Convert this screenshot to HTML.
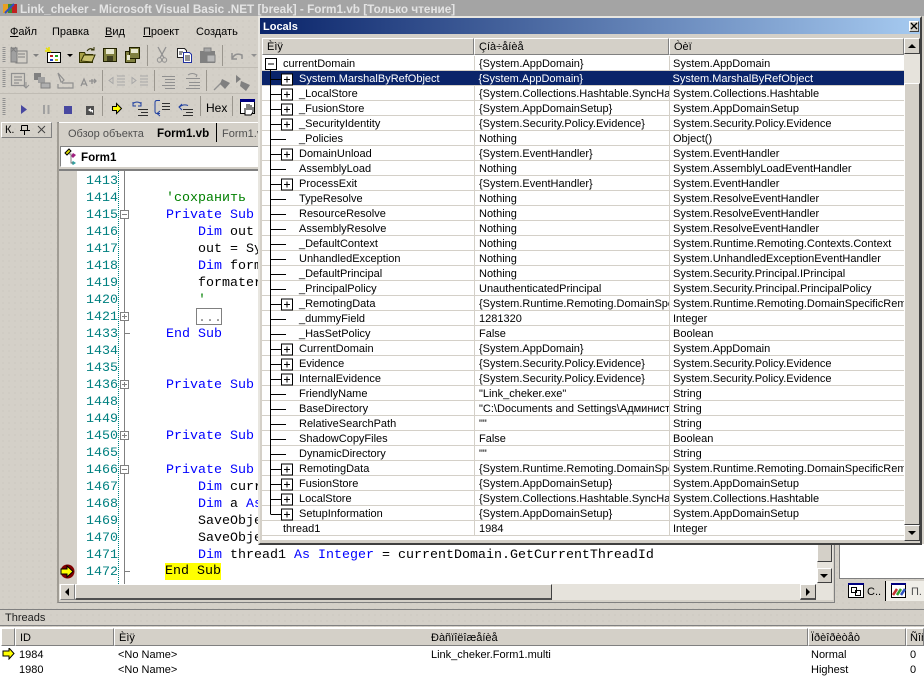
<!DOCTYPE html>
<html><head><meta charset="utf-8"><style>
html,body{margin:0;padding:0;width:924px;height:681px;overflow:hidden}
body{position:relative;background-color:#d4d0c8;background-image:radial-gradient(#c4c0b8 0.6px,transparent 0.8px);background-size:6px 6px;font:11px "Liberation Sans","Noto Sans CJK SC",sans-serif;color:#000}
.a{position:absolute;white-space:nowrap}
.b{position:absolute;box-sizing:border-box}
.c{position:absolute;font:13.33px/17px "Liberation Mono",monospace;white-space:pre;left:0;margin-top:1px}
.n{position:absolute;left:86px;font:13.33px/17px "Liberation Mono",monospace;color:#008080;margin-top:1px}
i{font-style:normal;color:#00f}
#l table{position:absolute;left:262px;top:56px;width:642px;table-layout:fixed;border-collapse:collapse;background:#fff}
#l td{height:11px;padding:3px 0 0;border-bottom:1px solid #d4d0c8;border-right:1px solid #d4d0c8;overflow:hidden;white-space:nowrap;line-height:11px;box-sizing:content-box}
#l td:nth-child(1){padding-left:37px;width:175px}
#l td:nth-child(2){padding-left:4px;width:190px}
#l td:nth-child(3){padding-left:3px;border-right:0}
#l tr.s td{background:#0a246a;color:#fff;border-right:0}
#l td.t{padding-left:21px!important;width:191px!important}
.h{position:absolute;box-sizing:border-box;background:#d4d0c8;border:1px solid;border-color:#fff #808080 #808080 #fff;line-height:17px;padding-left:4px}
.th{line-height:19px}
.sb{position:absolute;box-sizing:border-box;background:#d4d0c8;border:1px solid;border-color:#fff #404040 #404040 #fff}
</style></head><body>

<div class="b" style="left:0;top:0;width:924px;height:16px;background:#a4a4a4"></div>
<svg class="a" style="left:2px;top:3px" width="16" height="12"><rect x="1" y="1" width="5" height="9" fill="#e8a020"/><rect x="6" y="1" width="5" height="9" fill="#3a8a30"/><rect x="10" y="1" width="5" height="9" fill="#c02020"/><path d="M3 10L12 1" stroke="#3050c0" stroke-width="2"/></svg>
<div class="a" style="left:20px;top:3px;color:#e4e4e4;font-weight:bold;font-size:11.75px;line-height:14px">Link_cheker - Microsoft Visual Basic .NET [break] - Form1.vb [Только чтение]</div>

<div class="a" style="left:10px;top:25px;line-height:14px"><u>Ф</u>айл</div>
<div class="a" style="left:52px;top:25px;line-height:14px">Правка</div>
<div class="a" style="left:105px;top:25px;line-height:14px"><u>В</u>ид</div>
<div class="a" style="left:143px;top:25px;line-height:14px"><u>П</u>роект</div>
<div class="a" style="left:196px;top:25px;line-height:14px">Создать</div>

<!-- toolbars -->
<svg class="a" style="left:0;top:40px" width="262" height="82">
<g fill="none">
<path d="M0 27.500h258M0 53.500h258" stroke="#c0bcb4"/>
<path d="M4 7v16M4 30v17M4 58v17" stroke="#909090" stroke-width="3" stroke-dasharray="1 1"/>
<path d="M147.500 5v21M222.500 5v21M102.500 30v21M154.500 30v21M206.500 30v21M102.500 56v20M200.500 56v20M232.500 56v20" stroke="#9a968e"/>
<!-- row 1 -->
<path d="M16 11h11v12H16z" fill="#d4d0c8" stroke="#808080"/><path d="M11 8h6v14h-6z" fill="#a0a0a0" stroke="#808080"/><path d="M18 14h7M18 17h7" stroke="#808080"/><path d="M11 7l5 5M16 7l-5 5" stroke="#808080"/>
<path d="M33 14h6l-3 3z" fill="#808080"/>
<rect x="47.500" y="12.500" width="13" height="10" fill="#fff" stroke="#000"/><path d="M50 15h3v2h-3z" fill="#c02020"/><path d="M55 15h3v2h-3z" fill="#20a020"/><path d="M50 19h3v2h-3z" fill="#2040c0"/><path d="M55 19h3v2h-3z" fill="#c0c020"/><path d="M46 8l5 4M49 7v4M45 11h4" stroke="#e8e000" stroke-width="1.500"/>
<path d="M67 14h6l-3 3z" fill="#000"/>
<path d="M79.500 12.500h5l1 2h7v8h-13z" fill="#a8a048" stroke="#303000"/><path d="M81 21l3-6h11l-3 7z" fill="#c8c070" stroke="#303000"/><path d="M87 11q3-4 7-1M94 7v3h-3" stroke="#303000"/>
<rect x="103.500" y="8.500" width="13" height="13" fill="#808040" stroke="#202000"/><rect x="106" y="9" width="8" height="5" fill="#e8e8d0"/><rect x="107" y="16" width="6" height="5" fill="#404020"/>
<rect x="125.500" y="11.500" width="10" height="11" fill="#808040" stroke="#202000"/><rect x="129.500" y="7.500" width="10" height="11" fill="#808040" stroke="#202000"/><rect x="131" y="9" width="7" height="4" fill="#e8e8d0"/><rect x="127" y="15" width="3" height="5" fill="#e8e8d0"/>
<path d="M158 7l6 11M166 7l-6 11" stroke="#909090" stroke-width="1.300"/><circle cx="159.500" cy="20" r="2.200" stroke="#909090"/><circle cx="164.500" cy="20" r="2.200" stroke="#909090"/>
<path d="M177.500 8.500h7l2 2v7h-9z" stroke="#202020" fill="#fff"/><path d="M183.500 12.500h6l2 2v8h-8z" stroke="#2030a0" fill="#fff"/><path d="M179 12h4M179 14h3M185 16h5M185 18h5M185 20h5" stroke="#202020"/>
<rect x="200" y="11" width="15" height="12" fill="#808080"/><rect x="204" y="8" width="7" height="4" fill="#a8a8a8" stroke="#808080"/><rect x="207" y="15" width="8" height="7" fill="#b8b8b8" stroke="#808080"/>
<path d="M232 19q3-7 10-4v4M232 13v6h5" stroke="#909090" stroke-width="1.500"/><path d="M251 14h6l-3 3z" fill="#909090"/>
<!-- row 2 -->
<path d="M11.500 33.500h13v12h-13zM14 37h8M14 40h8M14 43h5" stroke="#909090" stroke-width="1.200"/><path d="M26 42v6M23 45l3 3 3-3" stroke="#909090"/>
<rect x="34" y="33" width="7" height="7" fill="#808080"/><rect x="38" y="37" width="7" height="6" fill="#a0a0a0"/><rect x="41" y="43" width="9" height="5" fill="#b0b0b0" stroke="#808080"/>
<path d="M58 33l3 9h1l2-2-6-7zM62 43h11v5H58v-4" stroke="#909090" stroke-width="1.200"/>
<path d="M81 46l3-7 3 7M82.500 44h3M89 41h6M92 39v5M94 39l2 2-2 2" stroke="#909090" stroke-width="1.300"/>
<path d="M117 36h8M117 39h8M117 42h8M117 45h8M109 40.500l4-3v6z" stroke="#a8a8a8"/>
<path d="M140 36h8M140 39h8M140 42h8M140 45h8M132 37.500v6l4-3z" stroke="#a8a8a8"/>
<path d="M162 36.500h13M165 39.500h10M165 42.500h10M162 45.500h13M165 48.500h10" stroke="#909090"/>
<path d="M186 38.500h14M189 42.500h11M189 45.500h11M186 48.500h14M188 35q4-3 9 0l-1 2" stroke="#909090"/>
<path d="M214 50l9-9" stroke="#909090" stroke-width="1.300"/><path d="M222 39l8 4-5 6-5-5z" fill="#808080"/>
<path d="M236 35l5 4-5 4zM241 41l9 4-4 6-6-5z" fill="#808080"/>
<!-- row 3 -->
<path d="M21 65l6 4.500-6 4.500z" fill="#4848a0"/>
<path d="M44 65v9M48.500 65v9" stroke="#a0a0a0" stroke-width="2"/>
<rect x="64" y="66" width="8" height="8" fill="#4848a0"/>
<rect x="86" y="66" width="8" height="9" fill="#505050"/><path d="M88 70l3-2v4zM90 70h3v3" fill="#fff"/>
<path d="M112.500 66.500h4v-3l5 5-5 5v-3h-4z" fill="#ffff00" stroke="#000"/>
<path d="M133 63.500q4-3 8 0M133 62v4h3M141 62v4h-3" stroke="#2040a0"/><path d="M138 69.500h10M141 72.500h7M138 75.500h10" stroke="#303030"/>
<path d="M160 60.500h-3q-2 0-2 2v9q0 2 2 2h3M160 71l-3 2.500 3 2.500" stroke="#2040a0"/><path d="M162 63.500h8M162 66.500h8M162 69.500h8" stroke="#303030"/>
<path d="M179 67.500q4-4 9-2M182 64l-3 3 3 3" stroke="#2040a0"/><path d="M183 69.500h10M186 72.500h7M183 75.500h10" stroke="#303030"/>
<rect x="240.500" y="59.500" width="14" height="14" fill="#fff" stroke="#000"/><rect x="240" y="59" width="15" height="3" fill="#000080"/><path d="M245 68v7h6l2-3v-5M247 64v6M249 64v6M251 65v5" stroke="#000" fill="#fff"/>
</g>
</svg>
<div class="a" style="left:206px;top:101px;line-height:14px;font-size:12px">Hex</div>

<!-- small tool panel -->
<div class="b" style="left:1px;top:122px;width:51px;height:16px;border:1px solid #808080;border-top-color:#fff;border-left-color:#fff;line-height:14px;padding-left:3px">К.</div>
<svg class="a" style="left:18px;top:124px" width="30" height="12"><path d="M3.500 1.500h6v5h2M2 6.500h10M6.500 6v5M3.500 1.500v5" fill="none" stroke="#000"/><path d="M20 2l7 7M27 2l-7 7" stroke="#404040"/></svg>

<!-- editor frame -->
<div class="b" style="left:57px;top:122px;width:778px;height:481px;border:1px solid #808080;border-left:2px solid #a09c94"></div>
<div class="b" style="left:59px;top:122px;width:202px;height:21px;background:#d4d0c8;border-top:1px solid #fff"></div>
<div class="b" style="left:152px;top:123px;width:65px;height:19px;background:#d4d0c8;border-right:1px solid #000"></div>
<div class="a" style="left:68px;top:127px;line-height:14px;color:#505050">Обзор объекта</div>
<div class="a" style="left:157px;top:127px;line-height:14px;font-weight:bold;font-size:11.6px">Form1.vb</div>
<div class="a" style="left:222px;top:127px;line-height:14px;color:#505050">Form1.vb</div>
<div class="b" style="left:60px;top:146px;width:210px;height:21px;background:#fff;border:1px solid;border-color:#808080 #fff #fff #808080"></div>
<svg class="a" style="left:63px;top:148px" width="20" height="18"><path d="M2 5l4-4 2 2-4 4z" fill="#e0e000" stroke="#000"/><path d="M10 5l3 2-3 3-2-2z" fill="#a02080"/><path d="M10 13l3 2-3 2-2-2z" fill="#30a0a0"/><path d="M6 6h2v9h2" stroke="#808080" fill="none"/></svg>
<div class="a" style="left:81px;top:151px;line-height:14px;font-weight:bold;font-size:11.6px">Form1</div>

<!-- code area -->
<div class="b" style="left:59px;top:171px;width:18px;height:413px;background:#d4d0c8"></div>
<div class="b" style="left:77px;top:171px;width:740px;height:413px;background:#fff"></div>
<div class="b" style="left:59px;top:169px;width:776px;height:2px;background:#808080"></div>
<div class="b" style="left:118px;top:171px;width:1px;height:413px;border-left:1px dotted #008080"></div>
<div class="b" style="left:124px;top:171px;width:1px;height:413px;background:#808080"></div>

<div class="n" style="top:172px">1413</div><div class="n" style="top:189px">1414</div><div class="n" style="top:206px">1415</div><div class="n" style="top:223px">1416</div><div class="n" style="top:240px">1417</div><div class="n" style="top:257px">1418</div><div class="n" style="top:274px">1419</div><div class="n" style="top:291px">1420</div><div class="n" style="top:308px">1421</div><div class="n" style="top:325px">1433</div><div class="n" style="top:342px">1434</div><div class="n" style="top:359px">1435</div><div class="n" style="top:376px">1436</div><div class="n" style="top:393px">1448</div><div class="n" style="top:410px">1449</div><div class="n" style="top:427px">1450</div><div class="n" style="top:444px">1465</div><div class="n" style="top:461px">1466</div><div class="n" style="top:478px">1467</div><div class="n" style="top:495px">1468</div><div class="n" style="top:512px">1469</div><div class="n" style="top:529px">1470</div><div class="n" style="top:546px">1471</div><div class="n" style="top:563px">1472</div>

<div class="c" style="left:166px;top:189px;color:#008000">'сохранить</div>
<div class="c" style="left:166px;top:206px"><i>Private Sub</i></div>
<div class="c" style="left:198px;top:223px"><i>Dim</i> out</div>
<div class="c" style="left:198px;top:240px">out = Sy</div>
<div class="c" style="left:198px;top:257px"><i>Dim</i> form</div>
<div class="c" style="left:198px;top:274px">formater</div>
<div class="c" style="left:198px;top:291px;color:#008000">'</div>
<div class="b" style="left:196px;top:308px;width:26px;height:17px;border:1px solid #808080"></div>
<div class="c" style="left:198px;top:309px;color:#808080">...</div>
<div class="c" style="left:166px;top:325px"><i>End Sub</i></div>
<div class="c" style="left:166px;top:376px"><i>Private Sub</i></div>
<div class="c" style="left:166px;top:427px"><i>Private Sub</i></div>
<div class="c" style="left:166px;top:461px"><i>Private Sub</i></div>
<div class="c" style="left:198px;top:478px"><i>Dim</i> curr</div>
<div class="c" style="left:198px;top:495px"><i>Dim</i> a <i>As</i></div>
<div class="c" style="left:198px;top:512px">SaveObje</div>
<div class="c" style="left:198px;top:529px">SaveObje</div>
<div class="c" style="left:198px;top:546px"><i>Dim</i> thread1 <i>As</i> <i>Integer</i> = currentDomain.GetCurrentThreadId</div>
<div class="c" style="left:165px;top:563px;margin-top:0;padding-top:1px;line-height:16px;background:#ffff00;color:#000;height:16px">End Sub</div>

<svg class="a" style="left:58px;top:170px" width="90" height="412" viewBox="58 170 90 412">
<g fill="#fff" stroke="#808080"><rect x="120.500" y="210.500" width="8" height="8"/><rect x="120.500" y="312.500" width="8" height="8"/><rect x="120.500" y="380.500" width="8" height="8"/><rect x="120.500" y="431.500" width="8" height="8"/><rect x="120.500" y="465.500" width="8" height="8"/></g>
<path d="M122 214.500h5M122 316.500h5M124.500 314v5M122 384.500h5M124.500 382v5M122 435.500h5M124.500 433v5M122 469.500h5" stroke="#808080"/>
<path d="M125 333.500h5M125 571.500h5" stroke="#808080"/>
<circle cx="67.500" cy="571.500" r="7" fill="#800000"/>
<path d="M61 569h6v-3l6 5.500-6 5.500v-3h-6z" fill="#ffff00" stroke="#000"/>
</svg>

<!-- editor scrollbars -->
<div class="b" style="left:59px;top:584px;width:774px;height:16px;background:#e6e3dc"></div>
<div class="sb" style="left:60px;top:584px;width:15px;height:16px;border-color:#fff #808080 #808080 #fff"></div>
<svg class="a" style="left:64px;top:588px" width="6" height="9"><path d="M5 0v8L1 4z" fill="#000"/></svg>
<div class="sb" style="left:75px;top:584px;width:477px;height:16px;border-bottom:2px solid #505050"></div>
<div class="sb" style="left:800px;top:584px;width:16px;height:16px;border-bottom:2px solid #505050"></div>
<svg class="a" style="left:805px;top:588px" width="6" height="9"><path d="M1 0v8l4-4z" fill="#000"/></svg>
<div class="b" style="left:817px;top:540px;width:16px;height:44px;background:#e6e3dc"></div>
<div class="sb" style="left:817px;top:540px;width:15px;height:22px"></div>
<div class="sb" style="left:817px;top:568px;width:15px;height:15px"></div>
<svg class="a" style="left:820px;top:573px" width="9" height="6"><path d="M0 1h8L4 5z" fill="#000"/></svg>

<!-- right panel -->
<div class="b" style="left:839px;top:544px;width:85px;height:35px;background:#fff;border-left:1px solid #808080;border-bottom:1px solid #808080"></div>
<div class="b" style="left:885px;top:581px;width:39px;height:20px;background:#f0eee8;border-left:1px solid #000"></div>
<div class="b" style="left:845px;top:581px;width:40px;height:20px;background:#d4d0c8"></div>
<svg class="a" style="left:847px;top:582px" width="70" height="18"><rect x="1.500" y="1.500" width="15" height="14" fill="#fff" stroke="#000"/><rect x="1" y="1" width="16" height="2" fill="#000080"/><path d="M4.500 5.500h5v5h-5zM8.500 8.500h5v5h-5z" fill="#fff" stroke="#000"/><rect x="44.500" y="1.500" width="14" height="14" fill="#fff" stroke="#000"/><rect x="44" y="1" width="15" height="2" fill="#000080"/><path d="M46 13l4-6" stroke="#c03030" stroke-width="2.500"/><path d="M50 13l4-6" stroke="#30a030" stroke-width="2.500"/><path d="M54 13l4-6" stroke="#3050c0" stroke-width="2.500"/></svg>
<div class="a" style="left:867px;top:585px;line-height:14px">С..</div>
<div class="a" style="left:911px;top:585px;line-height:14px;color:#505050">П.</div>

<!-- Threads -->
<div class="b" style="left:0;top:609px;width:924px;height:17px;border-top:1px solid #808080;border-bottom:1px solid #808080;line-height:17px;padding-left:5px;color:#202020">Threads</div>
<div class="b" style="left:0;top:627px;width:924px;height:54px;background:#fff"></div>
<div class="h th" style="left:1px;top:628px;width:14px;height:18px"></div>
<div class="h th" style="left:15px;top:628px;width:99px;height:18px">ID</div>
<div class="h th" style="left:114px;top:628px;width:694px;height:18px">Èìÿ<span style="position:absolute;left:316px">Ðàñïîëîæåíèå</span></div>
<div class="h th" style="left:808px;top:628px;width:98px;height:18px;padding-left:2px">Ïðèîðèòåò</div>
<div class="h th" style="left:906px;top:628px;width:18px;height:18px;overflow:hidden;padding-left:3px">Ñîñòîÿíèå</div>
<svg class="a" style="left:2px;top:648px" width="13" height="12"><path d="M1 3h6V0l5 5.500-5 5.500V8H1z" fill="#ffff00" stroke="#000"/></svg>
<div class="a" style="left:19px;top:648px;line-height:14px">1984</div>
<div class="a" style="left:118px;top:648px;line-height:14px">&lt;No Name&gt;</div>
<div class="a" style="left:431px;top:648px;line-height:14px">Link_cheker.Form1.multi</div>
<div class="a" style="left:811px;top:648px;line-height:14px">Normal</div>
<div class="a" style="left:910px;top:648px;line-height:14px">0</div>
<div class="a" style="left:19px;top:663px;line-height:14px">1980</div>
<div class="a" style="left:118px;top:663px;line-height:14px">&lt;No Name&gt;</div>
<div class="a" style="left:811px;top:663px;line-height:14px">Highest</div>
<div class="a" style="left:910px;top:663px;line-height:14px">0</div>

<!-- Locals window -->
<div id="l">
<div class="b" style="left:258px;top:16px;width:664px;height:529px;background:#d4d0c8;border:2px solid;border-color:#e8e6e0 #404040 #404040 #e8e6e0"></div>
<div class="b" style="left:260px;top:18px;width:660px;height:16px;background:linear-gradient(90deg,#0a246a,#a6caf0)"></div>
<div class="a" style="left:263px;top:20px;color:#fff;font-weight:bold;line-height:14px">Locals</div>
<div class="sb" style="left:909px;top:21px;width:10px;height:11px;background:#d4d0c8"></div>
<svg class="a" style="left:910px;top:22px" width="8" height="8"><path d="M1 1l6 6M7 1l-6 6" stroke="#000" stroke-width="1.300"/></svg>
<div class="h" style="left:262px;top:38px;width:212px;height:17px">Èìÿ</div>
<div class="h" style="left:474px;top:38px;width:195px;height:17px">Çíà÷åíèå</div>
<div class="h" style="left:669px;top:38px;width:235px;height:17px">Òèï</div>
<div class="b" style="left:262px;top:55px;width:642px;height:485px;background:#fff"></div>
<table>
<tr><td class="t">currentDomain</td><td>{System.AppDomain}</td><td>System.AppDomain</td></tr>
<tr class="s"><td>System.MarshalByRefObject</td><td>{System.AppDomain}</td><td>System.MarshalByRefObject</td></tr>
<tr><td>_LocalStore</td><td>{System.Collections.Hashtable.SyncHashtable}</td><td>System.Collections.Hashtable</td></tr>
<tr><td>_FusionStore</td><td>{System.AppDomainSetup}</td><td>System.AppDomainSetup</td></tr>
<tr><td>_SecurityIdentity</td><td>{System.Security.Policy.Evidence}</td><td>System.Security.Policy.Evidence</td></tr>
<tr><td>_Policies</td><td>Nothing</td><td>Object()</td></tr>
<tr><td>DomainUnload</td><td>{System.EventHandler}</td><td>System.EventHandler</td></tr>
<tr><td>AssemblyLoad</td><td>Nothing</td><td>System.AssemblyLoadEventHandler</td></tr>
<tr><td>ProcessExit</td><td>{System.EventHandler}</td><td>System.EventHandler</td></tr>
<tr><td>TypeResolve</td><td>Nothing</td><td>System.ResolveEventHandler</td></tr>
<tr><td>ResourceResolve</td><td>Nothing</td><td>System.ResolveEventHandler</td></tr>
<tr><td>AssemblyResolve</td><td>Nothing</td><td>System.ResolveEventHandler</td></tr>
<tr><td>_DefaultContext</td><td>Nothing</td><td>System.Runtime.Remoting.Contexts.Context</td></tr>
<tr><td>UnhandledException</td><td>Nothing</td><td>System.UnhandledExceptionEventHandler</td></tr>
<tr><td>_DefaultPrincipal</td><td>Nothing</td><td>System.Security.Principal.IPrincipal</td></tr>
<tr><td>_PrincipalPolicy</td><td>UnauthenticatedPrincipal</td><td>System.Security.Principal.PrincipalPolicy</td></tr>
<tr><td>_RemotingData</td><td>{System.Runtime.Remoting.DomainSpecificRemotingData}</td><td>System.Runtime.Remoting.DomainSpecificRemotingData</td></tr>
<tr><td>_dummyField</td><td>1281320</td><td>Integer</td></tr>
<tr><td>_HasSetPolicy</td><td>False</td><td>Boolean</td></tr>
<tr><td>CurrentDomain</td><td>{System.AppDomain}</td><td>System.AppDomain</td></tr>
<tr><td>Evidence</td><td>{System.Security.Policy.Evidence}</td><td>System.Security.Policy.Evidence</td></tr>
<tr><td>InternalEvidence</td><td>{System.Security.Policy.Evidence}</td><td>System.Security.Policy.Evidence</td></tr>
<tr><td>FriendlyName</td><td>"Link_cheker.exe"</td><td>String</td></tr>
<tr><td>BaseDirectory</td><td>"C:\Documents and Settings\Администратор"</td><td>String</td></tr>
<tr><td>RelativeSearchPath</td><td>""</td><td>String</td></tr>
<tr><td>ShadowCopyFiles</td><td>False</td><td>Boolean</td></tr>
<tr><td>DynamicDirectory</td><td>""</td><td>String</td></tr>
<tr><td>RemotingData</td><td>{System.Runtime.Remoting.DomainSpecificRemotingData}</td><td>System.Runtime.Remoting.DomainSpecificRemotingData</td></tr>
<tr><td>FusionStore</td><td>{System.AppDomainSetup}</td><td>System.AppDomainSetup</td></tr>
<tr><td>LocalStore</td><td>{System.Collections.Hashtable.SyncHashtable}</td><td>System.Collections.Hashtable</td></tr>
<tr><td>SetupInformation</td><td>{System.AppDomainSetup}</td><td>System.AppDomainSetup</td></tr>
<tr><td class="t">thread1</td><td>1984</td><td>Integer</td></tr>
</table>
<svg class="a" style="left:262px;top:56px" width="40" height="470" viewBox="262 56 40 470">
<defs><g id="p"><rect x="-5.500" y="-5.500" width="11" height="11" fill="#fff" stroke="#000"/><path d="M-3 0h6M0-3v6" stroke="#000"/></g></defs>
<path d="M270.500 69V514.500M271 79.500h11M271 94.500h11M271 109.500h11M271 124.500h11M271 139.500h15M271 154.500h11M271 169.500h15M271 184.500h11M271 199.500h15M271 214.500h15M271 229.500h15M271 244.500h15M271 259.500h15M271 274.500h15M271 289.500h15M271 304.500h11M271 319.500h15M271 334.500h15M271 349.500h11M271 364.500h11M271 379.500h11M271 394.500h15M271 409.500h15M271 424.500h15M271 439.500h15M271 454.500h15M271 469.500h11M271 484.500h11M271 499.500h11M271 514.500h11" stroke="#000" fill="none"/>
<rect x="265.500" y="58.500" width="11" height="11" fill="#fff" stroke="#000"/><path d="M268 64h6" stroke="#000"/>
<use href="#p" x="287" y="79.500"/><use href="#p" x="287" y="94.500"/><use href="#p" x="287" y="109.500"/><use href="#p" x="287" y="124.500"/><use href="#p" x="287" y="154.500"/><use href="#p" x="287" y="184.500"/><use href="#p" x="287" y="304.500"/><use href="#p" x="287" y="349.500"/><use href="#p" x="287" y="364.500"/><use href="#p" x="287" y="379.500"/><use href="#p" x="287" y="469.500"/><use href="#p" x="287" y="484.500"/><use href="#p" x="287" y="499.500"/><use href="#p" x="287" y="514.500"/>
</svg>
<!-- locals scrollbar -->
<div class="b" style="left:904px;top:38px;width:16px;height:503px;background:#e6e3dc"></div>
<div class="sb" style="left:904px;top:38px;width:16px;height:16px"></div>
<svg class="a" style="left:908px;top:43px" width="9" height="6"><path d="M0 5h8L4 1z" fill="#000"/></svg>
<div class="sb" style="left:904px;top:83px;width:16px;height:442px"></div>
<div class="sb" style="left:904px;top:525px;width:16px;height:16px"></div>
<svg class="a" style="left:908px;top:530px" width="9" height="6"><path d="M0 1h8L4 5z" fill="#000"/></svg>
</div>
</body></html>
